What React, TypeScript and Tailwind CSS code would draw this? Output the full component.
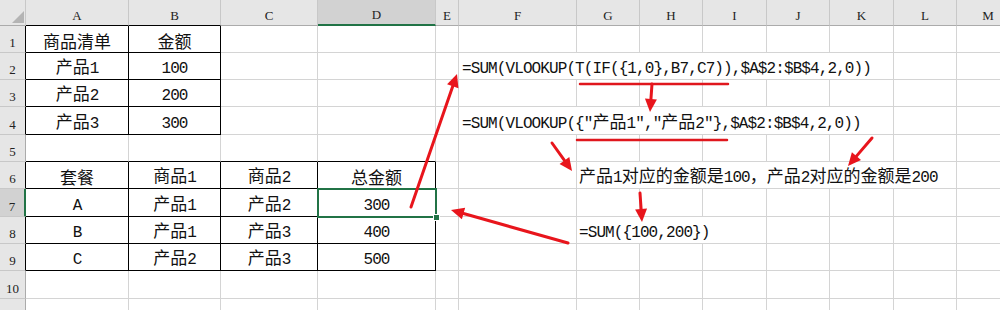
import React from "react";

const COLS = [
  { k: "A", w: 103 },
  { k: "B", w: 92 },
  { k: "C", w: 97 },
  { k: "D", w: 118 },
  { k: "E", w: 23 },
  { k: "F", w: 118 },
  { k: "G", w: 63 },
  { k: "H", w: 63 },
  { k: "I", w: 64 },
  { k: "J", w: 63 },
  { k: "K", w: 64 },
  { k: "L", w: 63 },
  { k: "M", w: 63 },
];

const ROWS = [27, 27, 27, 28, 27, 27, 28, 27, 27, 28, 27];

type Cell = { text: string; span?: number; left?: boolean; pad?: string };

const cells: Record<string, Cell> = {
  A1: { text: "商品清单" },
  B1: { text: "金额" },
  A2: { text: "产品1" },
  B2: { text: "100" },
  A3: { text: "产品2" },
  B3: { text: "200" },
  A4: { text: "产品3" },
  B4: { text: "300" },
  A6: { text: "套餐" },
  B6: { text: "商品1" },
  C6: { text: "商品2" },
  D6: { text: "总金额" },
  A7: { text: "A" },
  B7: { text: "产品1" },
  C7: { text: "产品2" },
  D7: { text: "300" },
  A8: { text: "B" },
  B8: { text: "产品1" },
  C8: { text: "产品3" },
  D8: { text: "400" },
  A9: { text: "C" },
  B9: { text: "产品2" },
  C9: { text: "产品3" },
  D9: { text: "500" },
  F2: { text: "=SUM(VLOOKUP(T(IF({1,0},B7,C7)),$A$2:$B$4,2,0))", span: 6, left: true, pad: "pl-[3px]" },
  F4: { text: '=SUM(VLOOKUP({"产品1","产品2"},$A$2:$B$4,2,0))', span: 6, left: true, pad: "pl-[3px]" },
  G6: { text: "产品1对应的金额是100，产品2对应的金额是200", span: 6, left: true, pad: "pl-[2px]" },
  G8: { text: "=SUM({100,200})", span: 3, left: true, pad: "pl-[2px]" },
};

// tables with black borders: A1:B4 and A6:D9
function inTable(col: number, row: number) {
  if (row >= 1 && row <= 4 && col <= 1) return true;
  if (row >= 6 && row <= 9 && col <= 3) return true;
  return false;
}

const CJK = /([\u3000-\u9fff\uff00-\uffef]+)/;

function Txt({ s }: { s: string }) {
  const parts = s.split(CJK).filter(Boolean);
  return (
    <span className="whitespace-nowrap leading-[17px]">
      {parts.map((p, i) =>
        CJK.test(p) ? (
          <span key={i} className="font-['Noto_Sans_CJK_SC',sans-serif] text-[17px]">
            {p}
          </span>
        ) : (
          <span
            key={i}
            className="font-['Liberation_Mono','Noto_Sans_CJK_SC',monospace] text-[16px] tracking-[-0.9px]"
          >
            {p}
          </span>
        )
      )}
    </span>
  );
}

function arrowHead(x1: number, y1: number, x2: number, y2: number, L = 13, W = 6) {
  const d = Math.hypot(x2 - x1, y2 - y1);
  const ux = (x2 - x1) / d;
  const uy = (y2 - y1) / d;
  const bx = x2 - ux * L;
  const by = y2 - uy * L;
  const nx = -uy;
  const ny = ux;
  return {
    base: [bx, by],
    pts: `${x2},${y2} ${bx + nx * W},${by + ny * W} ${bx - nx * W},${by - ny * W}`,
  };
}

const arrows = [
  [411, 207, 457, 74],
  [652, 84, 650, 112],
  [552, 143, 572, 171],
  [872, 138, 848, 166],
  [640, 193, 642, 222],
  [568, 243, 451, 210],
];

function Annotations() {
  return (
    <svg className="pointer-events-none absolute left-0 top-0 z-20" width="1000" height="310">
      <line x1="580" y1="84" x2="728" y2="84" stroke="#e0171d" strokeWidth="2.5" strokeLinecap="round" />
      <line x1="577" y1="140" x2="727" y2="140" stroke="#e0171d" strokeWidth="2.5" strokeLinecap="round" />
      {arrows.map(([x1, y1, x2, y2], i) => {
        const h = arrowHead(x1, y1, x2, y2);
        return (
          <g key={i}>
            <line x1={x1} y1={y1} x2={h.base[0]} y2={h.base[1]} stroke="#e8151c" strokeWidth="3" strokeLinecap="round" />
            <polygon points={h.pts} fill="#e8151c" />
          </g>
        );
      })}
    </svg>
  );
}

export default function App() {
  return (
    <div className="relative h-[310px] w-[1000px] overflow-hidden bg-white text-[#111]">
      {/* column headers */}
      <div className="flex h-[26px]">
        <div className="relative w-[26px] shrink-0 border-r border-b border-r-[#c8c8c8] border-b-[#ababab] bg-[#e6e6e6]">
          <svg className="absolute left-[12px] top-[11px]" width="13" height="13">
            <polygon points="12,0 12,12 0,12" fill="#b4b4b4" />
          </svg>
        </div>
        {COLS.map((c, i) => (
          <div
            key={c.k}
            style={{ width: c.w }}
            className={
              "flex shrink-0 items-end justify-center border-r border-r-[#c8c8c8] pb-[2px] font-['Liberation_Serif',serif] text-[13px] leading-[14px] text-[#222] " +
              (c.k === "D"
                ? "border-b-2 border-b-[#217346] bg-[#d2d2d2]"
                : i <= 1
                ? "border-b border-b-black bg-[#e6e6e6]"
                : "border-b border-b-[#ababab] bg-[#e6e6e6]")
            }
          >
            {c.k}
          </div>
        ))}
      </div>

      {ROWS.map((h, r) => {
        const row = r + 1;
        const out: React.ReactNode[] = [];
        let skip = 0;
        COLS.forEach((c, ci) => {
          if (skip > 0) {
            skip--;
            return;
          }
          const id = c.k + row;
          const cell = cells[id];
          const span = cell?.span ?? 1;
          skip = span - 1;
          const w = COLS.slice(ci, ci + span).reduce((a, b) => a + b.w, 0);
          const tbl = inTable(ci, row);
          const below = inTable(ci, row + 1);
          const rightNext = inTable(ci + span, row);
          const selected = id === "D7";
          out.push(
            <div
              key={id}
              style={{ width: w }}
              className={
                "relative flex shrink-0 items-end border-r border-b pb-[1px] " +
                (cell?.left ? "justify-start " + (cell.pad ?? "") + " " : "justify-center ") +
                (tbl || rightNext ? "border-r-black " : "border-r-[#d4d4d4] ") +
                (tbl || below ? "border-b-black " : "border-b-[#d4d4d4] ") +
                (selected ? "z-10" : "")
              }
            >
              {cell && <Txt s={cell.text} />}
              {selected && (
                <>
                  <div className="absolute -left-px -top-px -right-[2px] -bottom-[2px] border-2 border-[#217346]" />
                  <div className="absolute -right-[5px] -bottom-[5px] h-[7px] w-[7px] border border-white bg-[#217346]" />
                </>
              )}
            </div>
          );
        });
        return (
          <div key={row} className="flex" style={{ height: h }}>
            <div
              className={
                "flex w-[26px] shrink-0 items-end justify-center border-b border-b-[#c8c8c8] pb-[2px] font-['Liberation_Serif',serif] text-[13px] leading-[14px] text-[#222] " +
                (row === 7
                  ? "border-r-2 border-r-[#217346] bg-[#d2d2d2]"
                  : inTable(0, row)
                  ? "border-r border-r-black bg-[#e6e6e6]"
                  : "border-r border-r-[#ababab] bg-[#e6e6e6]")
              }
            >
              {row <= 10 ? row : null}
            </div>
            {out}
          </div>
        );
      })}

      <Annotations />
    </div>
  );
}
